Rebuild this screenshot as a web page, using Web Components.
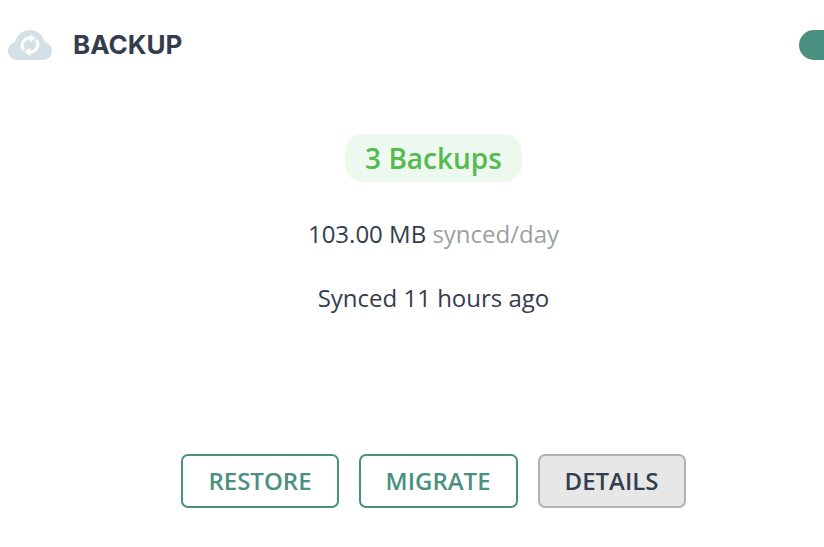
<!DOCTYPE html>
<html>
<head>
<meta charset="utf-8">
<title>Backup</title>
<style>
    html, body { margin: 0; height: 100%; background: #fff; overflow: hidden; }
</style>
</head>
<body>
<backup-card></backup-card>
<script>
class CardHeader extends HTMLElement {
    constructor() {
        super();
        this.attachShadow({ mode: 'open' });
        this.shadowRoot.innerHTML = `
            <style>
                :host { display: flex; align-items: center; height: 30px; padding: 30px 18px 0 8px; }
                svg { width: 44px; height: 30px; display: block; flex: none; }
                h2 { margin: 0 0 0 21px; font: 700 26px/30px Inter, "Liberation Sans", sans-serif; color: #333d4d; flex: 1; }
                .toggle { width: 50px; height: 30px; border-radius: 15px; background: #4a9080; flex: none; }
            </style>
            <svg viewBox="0 0 44 30">
                <path fill="#d5e0e6" d="M9 30C4 30 0 26 0 21c0-4.400 3-8 7.200-8.800C8.500 5.200 14.600 0 22 0c7.200 0 13.300 5 14.700 12C41 13 44 16.700 44 21c0 5-4 9-9 9z"/>
                <g fill="none" stroke="#fff" stroke-width="3">
                    <path d="M15.800 20a7.500 7.500 0 0 1 7-12"/>
                    <path d="M28.200 10a7.500 7.500 0 0 1-7 12"/>
                </g>
                <path fill="#fff" d="M22 4l5.500 4.500L22 12zM22 26l-5.500-4.500L22 18z"/>
            </svg>
            <h2><slot></slot></h2>
            <div class="toggle"></div>
        `;
    }
}

class ActionButton extends HTMLElement {
    static get observedAttributes() {
        return ['variant'];
    }

    constructor() {
        super();
        this.attachShadow({ mode: 'open' });
        this.shadowRoot.innerHTML = `
            <style>
                :host { display: inline-flex; box-sizing: border-box; height: 54px; align-items: center; justify-content: center;
                    border: 2px solid #4a9080; border-radius: 7px; padding: 0 25px; color: #4a9080;
                    font: 600 24px/1 "Open Sans", sans-serif; }
                :host([variant="muted"]) { background: #e7e7e7; border-color: #aeb4b4; color: #333d4d; }
            </style>
            <slot></slot>
        `;
    }
}

class BackupCard extends HTMLElement {
    constructor() {
        super();
        this.attachShadow({ mode: 'open' });
        this.shadowRoot.innerHTML = `
            <style>
                :host { display: block; width: 867px; height: 547px; font: 400 24px/30px "Open Sans", sans-serif; color: #333d4d; }
                .body { display: flex; flex-direction: column; align-items: center; padding-top: 74px; }
                .pill { height: 48px; padding: 0 20px; border-radius: 18px; background: #edf8ef; color: #55bb4e;
                    font: 600 28px/48px "Open Sans", sans-serif; }
                .rate { margin-top: 37px; }
                .rate span { color: #9ba0a3; }
                .synced { margin-top: 34px; }
                .actions { display: flex; justify-content: center; gap: 20px; margin-top: 141px; }
            </style>
            <card-header>BACKUP</card-header>
            <div class="body">
                <div class="pill">3 Backups</div>
                <div class="rate">103.00 MB <span>synced/day</span></div>
                <div class="synced">Synced 11 hours ago</div>
            </div>
            <div class="actions">
                <action-button>RESTORE</action-button>
                <action-button>MIGRATE</action-button>
                <action-button variant="muted">DETAILS</action-button>
            </div>
        `;
    }
}

customElements.define('card-header', CardHeader);
customElements.define('action-button', ActionButton);
customElements.define('backup-card', BackupCard);
</script>
</body>
</html>
